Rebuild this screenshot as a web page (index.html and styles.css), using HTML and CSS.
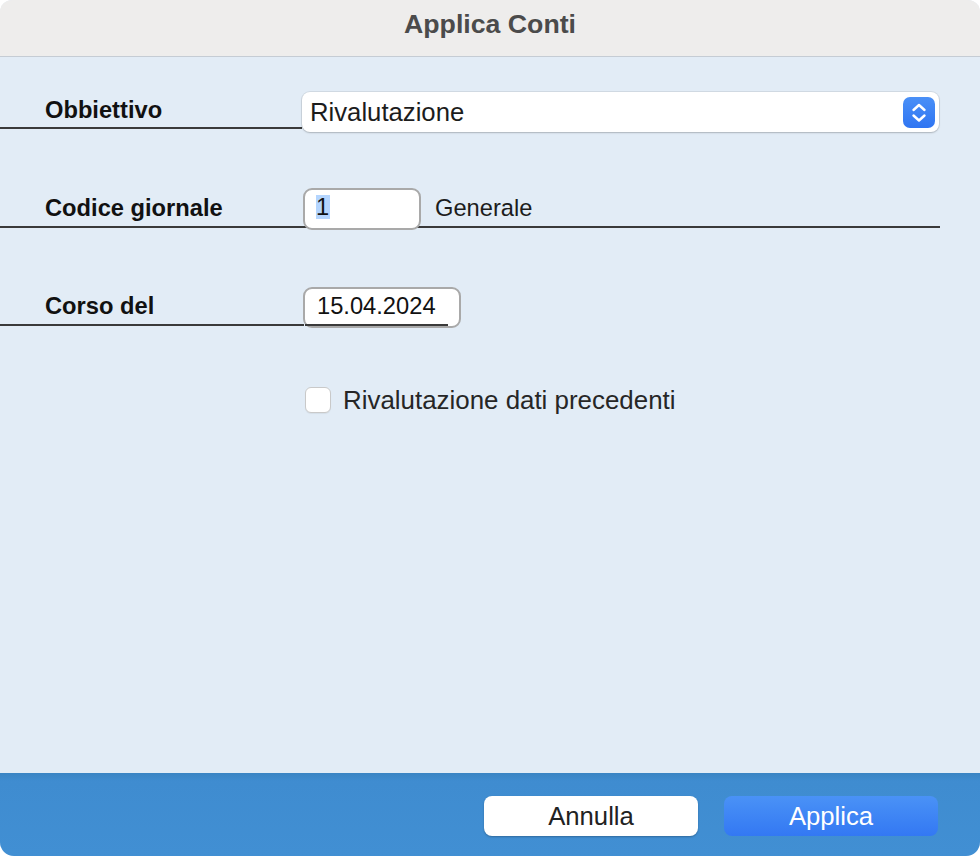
FILE: index.html
```html
<!DOCTYPE html>
<html lang="it">
<head>
<meta charset="utf-8">
<title>Applica Conti</title>
<link rel="stylesheet" href="styles.css">
</head>
<body>
<div class="window">
  <header class="titlebar">Applica Conti</header>
  <main class="content">
    <div class="row lined row-target">
      <label class="label">Obbiettivo</label>
      <div class="select">
        <span class="select-value">Rivalutazione</span>
        <span class="stepper">
          <svg width="32" height="31" viewBox="0 0 32 31">
            <path d="M10.5 13 L16 8 L21.5 13" fill="none" stroke="#fff" stroke-width="2.4" stroke-linecap="round" stroke-linejoin="round"/>
            <path d="M10.5 18.5 L16 23.5 L21.5 18.5" fill="none" stroke="#fff" stroke-width="2.4" stroke-linecap="round" stroke-linejoin="round"/>
          </svg>
        </span>
      </div>
    </div>
    <div class="row lined row-journal">
      <label class="label">Codice giornale</label>
      <div class="field field-code"><span class="selected">1</span></div>
      <span class="desc">Generale</span>
    </div>
    <div class="row lined row-date">
      <label class="label">Corso del</label>
      <div class="field field-date"><span class="date-text">15.04.2024</span></div>
    </div>
    <div class="row row-check">
      <span class="checkbox"></span>
      <span class="check-label">Rivalutazione dati precedenti</span>
    </div>
  </main>
  <footer class="footer">
    <button class="btn btn-cancel">Annulla</button>
    <button class="btn btn-apply">Applica</button>
  </footer>
</div>
</body>
</html>
```
FILE: styles.css
```css
* { box-sizing: border-box; }
html, body { margin: 0; padding: 0; background: #ffffff; }
body { font-family: "Liberation Sans", Arial, sans-serif; }

.window {
  width: 980px;
  height: 856px;
  display: flex;
  flex-direction: column;
  border-radius: 12px 12px 14px 14px;
  overflow: hidden;
  background: #e2ecf6;
}

.titlebar {
  flex: none;
  height: 57px;
  background: #eeedec;
  border-bottom: 1px solid #c5ccd4;
  text-align: center;
  font-weight: bold;
  font-size: 26.7px;
  line-height: 48px;
  color: #4b4b4b;
}

.content {
  flex: 1;
  padding-top: 35px;
}

.row {
  display: flex;
  align-items: flex-start;
}

.lined {
  background-image: linear-gradient(#3a3a3a, #3a3a3a);
  background-repeat: no-repeat;
}

.label {
  flex: none;
  width: 302px;
  padding-left: 45px;
  font-weight: bold;
  font-size: 23.7px;
  line-height: 28px;
  color: #111111;
}

.row-target { height: 96px; background-size: 302px 2px; background-position: 0 35px; }
.row-target .label { padding-top: 4px; }

.row-journal { height: 99px; background-size: 940px 2px; background-position: 0 38px; }
.row-journal .label { padding-top: 6px; }

.row-date { height: 100px; background-size: 304px 2px; background-position: 0 37px; }
.row-date .label { padding-top: 5px; }

.select {
  width: 637px;
  height: 40px;
  background: #ffffff;
  border-radius: 8px;
  box-shadow: 0 0 0 1px rgba(0, 0, 0, 0.07), 0 1px 2px rgba(0, 0, 0, 0.18);
  display: flex;
  align-items: center;
  justify-content: space-between;
  padding: 0 4px 0 8px;
}

.select-value {
  font-size: 25.7px;
  line-height: 30px;
  color: #1c1c1c;
  padding-top: 0;
}

.stepper {
  width: 32px;
  height: 31px;
  border-radius: 7px;
  background: linear-gradient(#4a90f7, #2f75f2);
  display: flex;
}

.field {
  background: #ffffff;
  border: 2px solid #a9a9a9;
  border-radius: 9px;
  margin-left: 1px;
}

.field-code {
  width: 118px;
  height: 42px;
  padding: 5px 0 0 11px;
  line-height: 24px;
}

.selected {
  display: inline-block;
  background: #b4d5fe;
  font-size: 23.7px;
  line-height: 24px;
  color: #111111;
  padding-right: 1px;
}

.desc {
  margin-left: 14px;
  padding-top: 6px;
  font-size: 23.7px;
  line-height: 28px;
  color: #1c1c1c;
}

.field-date {
  width: 158px;
  height: 41px;
  padding-top: 3px;
}

.date-text {
  display: block;
  width: 143px;
  padding-left: 12px;
  font-size: 23.7px;
  line-height: 28px;
  height: 34px;
  padding-bottom: 4px;
  border-bottom: 2px solid #3a3a3a;
  color: #111111;
}

.row-check {
  align-items: center;
  height: 26px;
}

.checkbox {
  flex: none;
  width: 26px;
  height: 26px;
  margin-left: 305px;
  background: #ffffff;
  border: 1px solid #c9c9c9;
  border-radius: 6px;
  box-shadow: 0 1px 1px rgba(0, 0, 0, 0.06);
}

.check-label {
  margin-left: 12px;
  font-size: 25.9px;
  line-height: 30px;
  color: #262626;
}

.footer {
  flex: none;
  height: 83px;
  background: linear-gradient(#3a84c3 0px, #3f8cd0 8px, #418fd3 83px);
  display: flex;
  justify-content: flex-end;
  align-items: flex-start;
  gap: 26px;
  padding: 23px 42px 0 0;
}

.btn {
  width: 214px;
  height: 40px;
  border: none;
  border-radius: 8px;
  font-family: "Liberation Sans", Arial, sans-serif;
  font-size: 25.7px;
  line-height: 40px;
  padding: 0;
}

.btn-cancel {
  background: #ffffff;
  color: #222222;
  box-shadow: 0 1px 2px rgba(0, 0, 0, 0.25);
}

.btn-apply {
  background: linear-gradient(#4a92f6, #3378f3);
  color: #ffffff;
}
```
